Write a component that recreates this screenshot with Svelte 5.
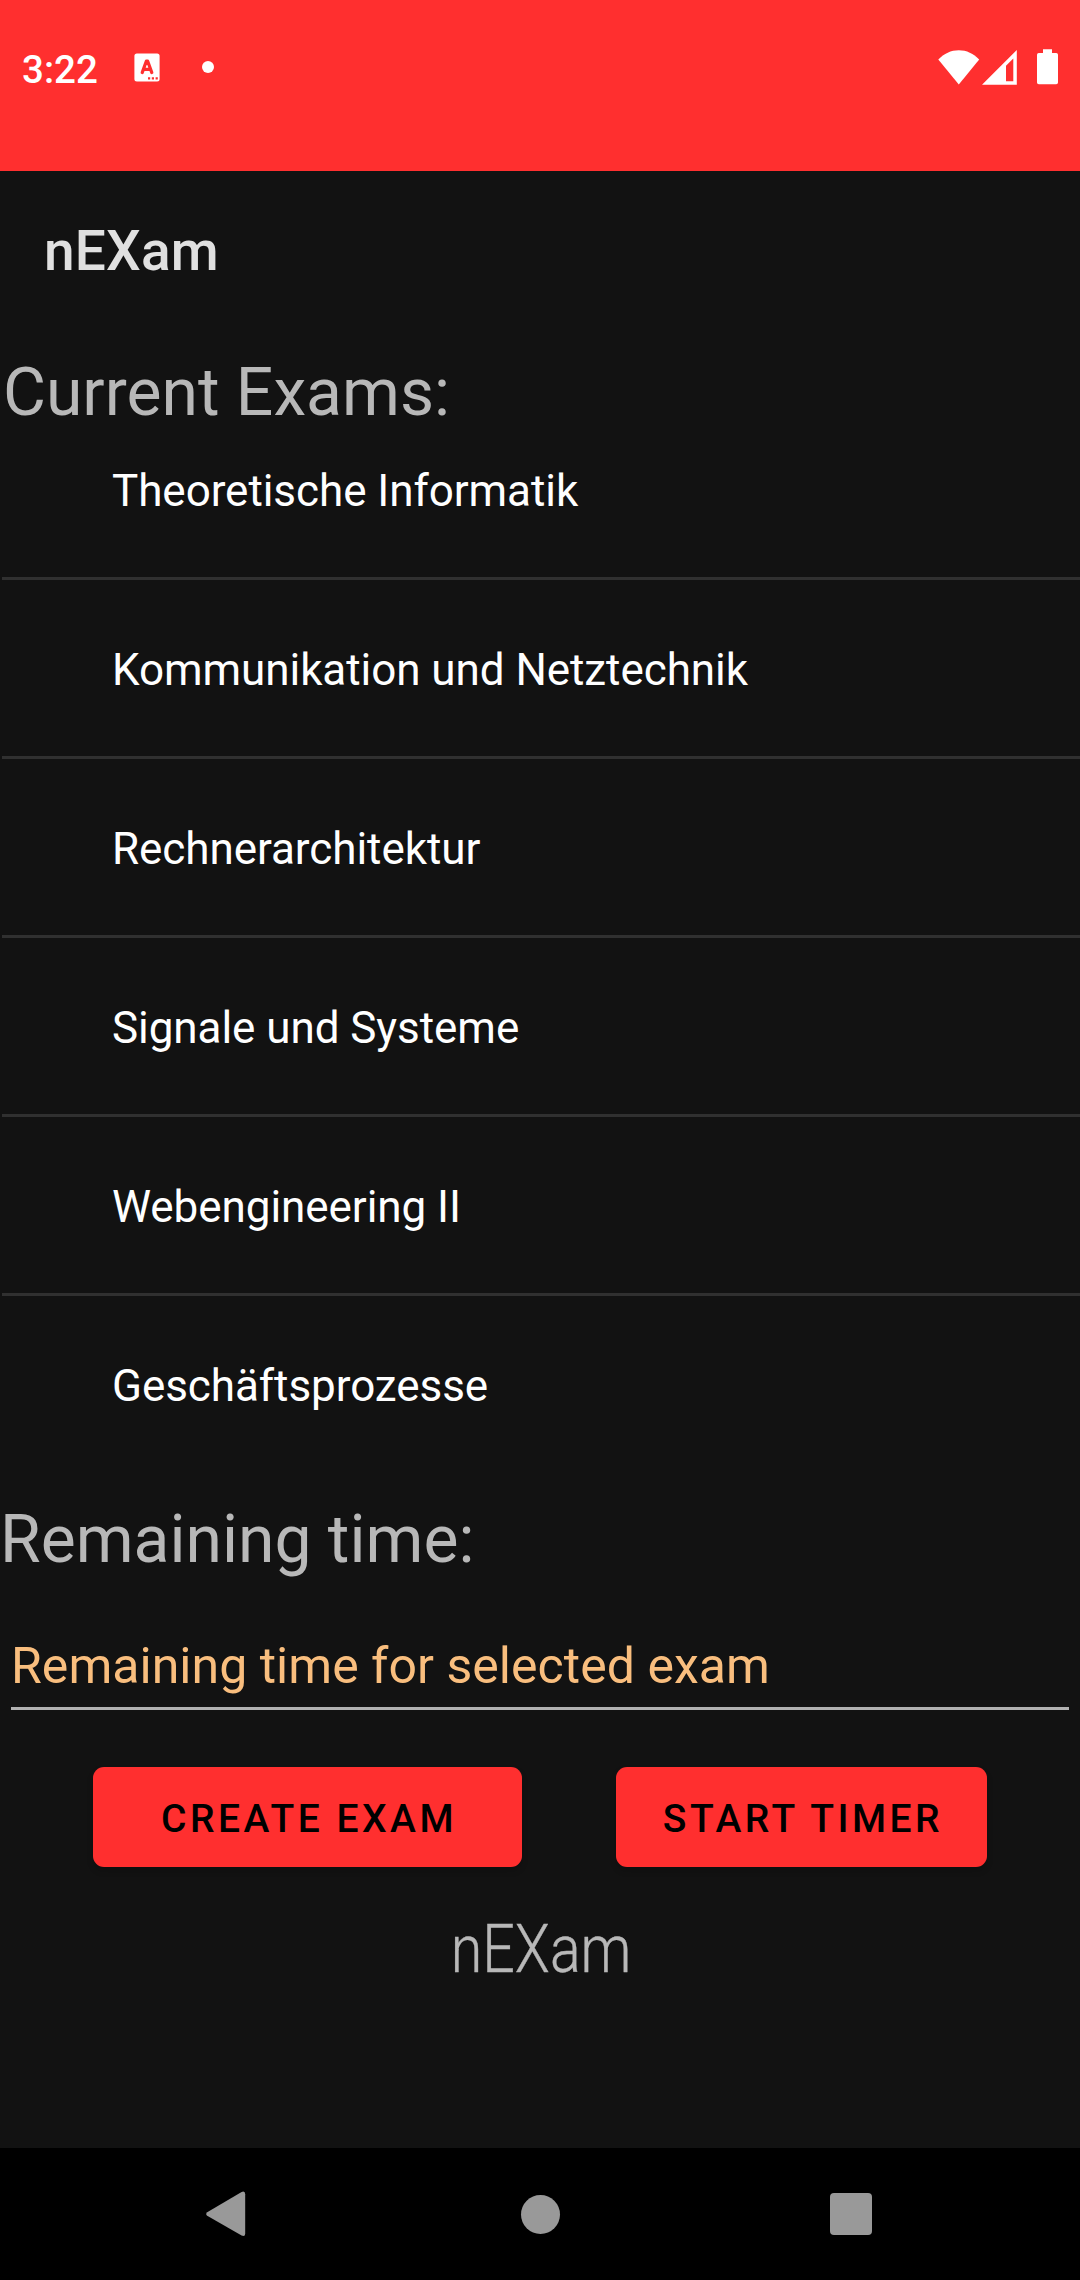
<script>
  const exams = [
    'Theoretische Informatik',
    'Kommunikation und Netztechnik',
    'Rechnerarchitektur',
    'Signale und Systeme',
    'Webengineering II',
    'Geschäftsprozesse'
  ];
</script>

<div class="screen">
  <header class="status">
    <span class="clock">3:22</span>
    <svg class="notif" width="26" height="29" viewBox="0 0 26 29">
      <rect x="0.4" y="0.4" width="25.2" height="28.2" rx="2.5" fill="#fff" />
      <path d="M8.2 19.6 12.3 8.2H13.7L17.8 19.6M9.6 16.4H16.4" fill="none" stroke="#ff2f2f" stroke-width="3.2" stroke-linecap="round" stroke-linejoin="round" />
      <path d="M14 24.3h2.2v2.2H14zM17.8 24.3H20v2.2h-2.2zM21.6 24.3h2.2v2.2h-2.2z" fill="#ff2f2f" />
    </svg>
    <span class="dot"></span>
    <span class="spacer"></span>
    <svg class="wifi" width="42" height="35" viewBox="0 0 42 35">
      <path d="M0.3 9.6C6 3.6 13 0.3 20.8 0.3S35.5 3.6 41.2 9.6L20.8 34.4Z" fill="#fff" />
    </svg>
    <svg class="signal" width="35" height="35" viewBox="0 0 35 35">
      <path fill-rule="evenodd" d="M0 34.8 34.8 0V34.8ZM24 15.8V31.2H31.3V8.5Z" fill="#fff" />
    </svg>
    <svg class="battery" width="21" height="36" viewBox="0 0 21 36">
      <path d="M6 0.3H15V4H19.2Q21 4 21 5.8V33.6Q21 35.3 19.2 35.3H1.8Q0 35.3 0 33.6V5.8Q0 4 1.8 4H6Z" fill="#fff" />
    </svg>
  </header>

  <div class="appbar"><h1>nEXam</h1></div>

  <main>
    <h2 class="current">Current Exams:</h2>
    <div class="list">
      <ul>
        {#each exams as exam}
          <li>{exam}</li>
        {/each}
      </ul>
    </div>

    <h2 class="remaining">Remaining time:</h2>
    <div class="field">Remaining time for selected exam</div>

    <div class="actions">
      <button class="create">Create Exam</button>
      <button class="start">Start Timer</button>
    </div>

    <div class="brand"><span>nEXam</span></div>
  </main>

  <nav>
    <svg class="back" width="40" height="46" viewBox="0 0 40 46">
      <path d="M1.2 21.2 35.6 1Q39.2 -0.4 39.2 3.2V42.4Q39.2 46 35.6 44.6L1.2 24.8Q-0.8 23 1.2 21.2Z" fill="#999" />
    </svg>
    <span class="home"></span>
    <span class="recent"></span>
  </nav>
</div>

<style>
  :global(body) {
    margin: 0;
    background: #121212;
  }

  .screen {
    width: 1080px;
    height: 2280px;
    display: flex;
    flex-direction: column;
    background: #121212;
    font-family: Roboto, sans-serif;
    overflow: hidden;
  }

  .status {
    box-sizing: border-box;
    height: 171px;
    padding: 0 22px 37px;
    display: flex;
    align-items: center;
    background: #ff2f2f;
    color: #fff;
    flex: none;
  }

  .clock {
    width: 112px;
    padding-top: 6px;
    font-size: 38.5px;
    line-height: 46px;
    font-weight: 500;
  }

  .dot {
    width: 12px;
    height: 12px;
    margin-left: 42px;
    border-radius: 50%;
    background: #fff;
  }

  .spacer {
    flex: 1;
  }

  .signal {
    margin-left: 2px;
  }

  .battery {
    margin-left: 20px;
  }

  .appbar {
    height: 160px;
    padding-left: 44px;
    display: flex;
    align-items: center;
    flex: none;
  }

  h1,
  h2 {
    margin: 0;
  }

  h1 {
    font-size: 55px;
    line-height: 64px;
    font-weight: 500;
    letter-spacing: 0.2px;
    color: #e0e0e0;
  }

  main {
    flex: 1;
    min-height: 0;
  }

  h2 {
    font-size: 66px;
    font-weight: 400;
    color: #b8b8b8;
  }

  .current {
    padding: 33px 0 0 3px;
    line-height: 57px;
  }

  .list {
    height: 1059px;
    margin-left: 2px;
    overflow: hidden;
  }

  ul {
    margin: -20px 0 0;
    padding: 0;
    list-style: none;
  }

  li {
    box-sizing: border-box;
    height: 176px;
    padding: 4px 0 0 110px;
    display: flex;
    align-items: center;
    font-size: 44px;
    line-height: 52px;
    letter-spacing: -0.06px;
    color: #fff;
  }

  li + li {
    height: 179px;
    border-top: 3px solid #303030;
  }

  .remaining {
    margin-top: 21px;
    line-height: 77px;
  }

  .field {
    margin: 59px 11px 0;
    padding-bottom: 12px;
    border-bottom: 3px solid #b1b1b1;
    font-size: 50px;
    line-height: 58px;
    letter-spacing: 0.03px;
    color: #f9be7e;
  }

  .actions {
    display: flex;
    gap: 94px;
    padding: 57px 93px 0;
  }

  button {
    height: 100px;
    padding: 4px 0 0 3px;
    border: 0;
    border-radius: 11px;
    background: #ff2f2f;
    box-shadow: 0 4px 6px rgba(0, 0, 0, 0.18);
    color: #000;
    font: 500 39px Roboto, sans-serif;
    letter-spacing: 3.5px;
    text-transform: uppercase;
  }

  .create {
    width: 429px;
  }

  .start {
    width: 371px;
  }

  .brand {
    margin-top: 44px;
    padding-left: 3px;
    text-align: center;
    font-size: 66px;
    line-height: 77px;
    font-weight: 300;
    color: #b8b8b8;
  }

  .brand span {
    display: inline-block;
    transform: scaleX(0.868);
    -webkit-text-stroke: 0.4px #b8b8b8;
  }

  nav {
    box-sizing: border-box;
    height: 132px;
    padding: 0 208px 0 206px;
    display: flex;
    align-items: center;
    justify-content: space-between;
    background: #000;
    flex: none;
  }

  .home {
    width: 39px;
    height: 39px;
    margin-left: 4px;
    border-radius: 50%;
    background: #999;
  }

  .recent {
    width: 42px;
    height: 42px;
    border-radius: 4px;
    background: #999;
  }
</style>
